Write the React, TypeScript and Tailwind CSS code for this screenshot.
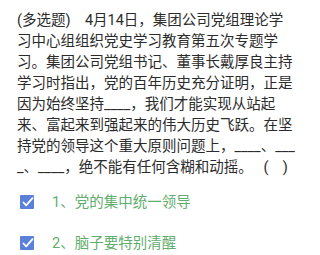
import React from "react";

function CheckBox() {
  return (
    <svg width="15" height="15" viewBox="0 0 15 15" className="shrink-0">
      <rect x="0" y="0" width="14" height="14" rx="1" fill="#5b80d9" />
      <polyline points="3.5,7.5 6.2,10.3 12.5,3.2" fill="none" stroke="#ffffff" strokeWidth="1.8" strokeLinecap="round" strokeLinejoin="round" />
    </svg>
  );
}

export default function App() {
  const font = { fontFamily: 'Roboto, "Noto Sans CJK SC", sans-serif' };
  return (
    <div className="w-[317px] h-[255px] bg-white overflow-hidden" style={font}>
      <p className="pt-[10px] pl-[17px] pr-[20px] text-[14.5px] leading-[21px] text-[#2b2b2b] break-all whitespace-pre-wrap">
        {"(多选题)    4月14日，集团公司党组理论学习中心组组织党史学习教育第五次专题学习。集团公司党组书记、董事长戴厚良主持学习时指出，党的百年历史充分证明，正是因为始终坚持____，我们才能实现从站起来、富起来到强起来的伟大历史飞跃。在坚持党的领导这个重大原则问题上，____、____、____，绝不能有任何含糊和动摇。   (    )"}
      </p>
      <div className="flex flex-col gap-[24px] mt-[16px] pl-[20px]">
        <div className="flex items-center gap-[17px]">
          <CheckBox />
          <span className="text-[14.5px] leading-[17px] text-[#5fae6e]">1、党的集中统一领导</span>
        </div>
        <div className="flex items-center gap-[17px]">
          <CheckBox />
          <span className="text-[14.5px] leading-[17px] text-[#5fae6e]">2、脑子要特别清醒</span>
        </div>
      </div>
    </div>
  );
}
